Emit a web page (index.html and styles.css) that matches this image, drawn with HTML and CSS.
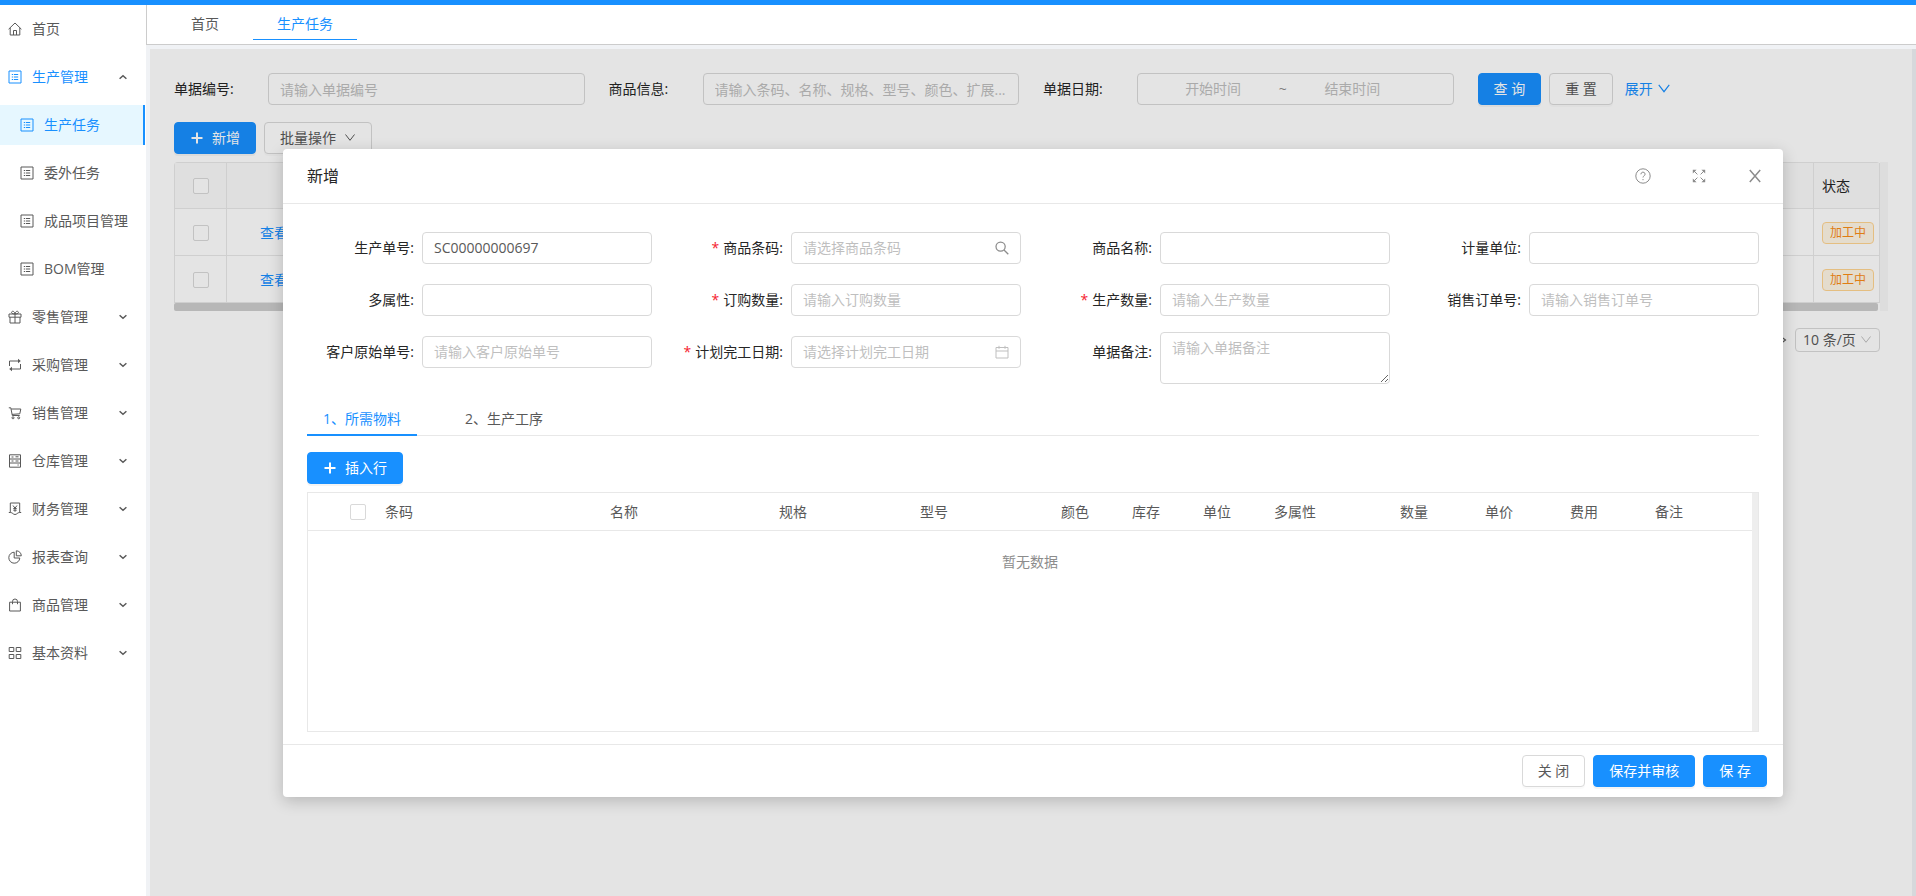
FILE: index.html
```html
<!DOCTYPE html>
<html lang="zh-CN">
<head>
<meta charset="utf-8">
<title>生产任务</title>
<link rel="stylesheet" href="styles.css">
</head>
<body>
<svg class="defs" aria-hidden="true">
  <symbol id="i-home" viewBox="0 0 14 14"><path d="M0.6 7.2 7 1l6.4 6.2M2.2 6v7h9.6V6M5.5 13V8.5h3V13"/></symbol>
  <symbol id="i-list" viewBox="0 0 14 14"><path d="M1 1h12v12H1zM3.8 4.5h1.4M3.8 7h1.4M3.8 9.5h1.4M6 4.5h4.2M6 7h4.2M6 9.5h4.2"/></symbol>
  <symbol id="i-gift" viewBox="0 0 14 14"><path d="M1 4h12v3.2H1zM2 7.2V13h10V7.2M7 4v9M7 4C4 4 3.4 3 3.6 2.1 4 .8 6.6.8 7 4c.4-3.200 3-3.200 3.400-1.900C10.600 3 10 4 7 4z"/></symbol>
  <symbol id="i-loop" viewBox="0 0 14 14"><path d="M1.500 8V3H11M1.500 6.500V3M12.500 6v5H3"/><path class="solid" d="M10 .8 12.800 3 10 5.200zM4 8.800 1.200 11 4 13.200z"/></symbol>
  <symbol id="i-cart" viewBox="0 0 14 14"><path d="M.8 1.800h2L4.300 9.500h7.400M3.200 3h9.600l-1 4.800-7.800.6"/><circle cx="5" cy="11.800" r="1"/><circle cx="10.700" cy="11.800" r="1"/></symbol>
  <symbol id="i-store" viewBox="0 0 14 14"><path d="M1.500.8h11v12.400h-11zM1.500 5h11M1.500 9h11M3.500 3h2M7.500 2.800h3M3.500 7h2M7.500 7h3M9.500 11h1.200"/></symbol>
  <symbol id="i-money" viewBox="0 0 14 14"><path d="M2.300 10.500V1h9.400v9.500M.8 10.500h1.500c2.500 0 2.700 2 4.700 2s2.200-2 4.700-2h1.500M5 3.500l2 2.700 2-2.700M7 6.200v3.600M5.300 6.500h3.400M5.300 8.200h3.400"/></symbol>
  <symbol id="i-pie" viewBox="0 0 14 14"><path d="M6.200 2.200A5.500 5.500 0 1 0 11.800 8H6.200zM8.300.8v5h5A5 5 0 0 0 8.300.8z"/></symbol>
  <symbol id="i-bag" viewBox="0 0 14 14"><path d="M1.600 4.200h10.800V13H1.600zM4.500 6.200V3.500a2.500 2.500 0 0 1 5 0v2.700"/></symbol>
  <symbol id="i-grid" viewBox="0 0 14 14"><path d="M1.200 1.500h4.600v4H1.200zM8.200 1.500h4.600v4H8.200zM1.200 8.500h4.600v4H1.200zM8.200 8.500h4.600v4H8.200z"/></symbol>
  <symbol id="i-down" viewBox="0 0 12 12"><path d="M1.500 2.500 6 8.300 10.500 2.500"/></symbol>
  <symbol id="i-caret" viewBox="0 0 8 8"><path d="M.6 2.200 4 5.200l3.400-3"/></symbol>
  <symbol id="i-plus" viewBox="0 0 14 14"><path d="M7 1.500v11M1.500 7h11"/></symbol>
  <symbol id="i-search" viewBox="0 0 14 14"><circle cx="5.600" cy="5.600" r="4.600"/><path d="m9 9 4.300 4.300"/></symbol>
  <symbol id="i-date" viewBox="0 0 14 14"><path d="M1 2.500h12V13H1zM1 6h12M4 .8v3M10 .8v3"/></symbol>
  <symbol id="i-help" viewBox="0 0 16 16"><circle cx="8" cy="8" r="7.200"/><path d="M5.900 6.300C5.900 3.400 10.100 3.500 10.100 6.200 10.100 7.900 8 7.700 8 9.500M8 11v1.200"/></symbol>
  <symbol id="i-full" viewBox="0 0 14 14"><path d="M2 2l3.400 3.400M12 2 8.600 5.400M12 12 8.600 8.600M2 12l3.400-3.400"/><path class="solid" d="M.8.800h3.800L.8 4.600zM13.200.8v3.800L9.400.8zM13.200 13.200H9.400l3.800-3.800zM.8 13.200V9.400l3.800 3.800z"/></symbol>
  <symbol id="i-close" viewBox="0 0 14 14"><path d="m1.800 1 10.400 12M12.200 1 1.800 13"/></symbol>
  <symbol id="i-next" viewBox="0 0 12 12"><path d="m3 1.500 6 4.500-6 4.500"/></symbol>
</svg>

<div class="app">
  <nav class="sidebar">
    <a class="item" href="#"><svg class="icon"><use href="#i-home"/></svg>首页</a>
    <a class="item open" href="#"><svg class="icon"><use href="#i-list"/></svg>生产管理<svg class="caret up"><use href="#i-caret"/></svg></a>
    <a class="item sub active" href="#"><svg class="icon"><use href="#i-list"/></svg>生产任务</a>
    <a class="item sub" href="#"><svg class="icon"><use href="#i-list"/></svg>委外任务</a>
    <a class="item sub" href="#"><svg class="icon"><use href="#i-list"/></svg>成品项目管理</a>
    <a class="item sub" href="#"><svg class="icon"><use href="#i-list"/></svg>BOM管理</a>
    <a class="item" href="#"><svg class="icon"><use href="#i-gift"/></svg>零售管理<svg class="caret"><use href="#i-caret"/></svg></a>
    <a class="item" href="#"><svg class="icon"><use href="#i-loop"/></svg>采购管理<svg class="caret"><use href="#i-caret"/></svg></a>
    <a class="item" href="#"><svg class="icon"><use href="#i-cart"/></svg>销售管理<svg class="caret"><use href="#i-caret"/></svg></a>
    <a class="item" href="#"><svg class="icon"><use href="#i-store"/></svg>仓库管理<svg class="caret"><use href="#i-caret"/></svg></a>
    <a class="item" href="#"><svg class="icon"><use href="#i-money"/></svg>财务管理<svg class="caret"><use href="#i-caret"/></svg></a>
    <a class="item" href="#"><svg class="icon"><use href="#i-pie"/></svg>报表查询<svg class="caret"><use href="#i-caret"/></svg></a>
    <a class="item" href="#"><svg class="icon"><use href="#i-bag"/></svg>商品管理<svg class="caret"><use href="#i-caret"/></svg></a>
    <a class="item" href="#"><svg class="icon"><use href="#i-grid"/></svg>基本资料<svg class="caret"><use href="#i-caret"/></svg></a>
  </nav>

  <div class="workspace">
    <div class="page-tabs">
      <a class="page-tab" href="#">首页</a>
      <a class="page-tab current" href="#">生产任务</a>
    </div>

    <main class="stage">
      <div class="page">
        <form class="search">
          <div class="search-field"><label for="q-no">单据编号:</label><input class="box" id="q-no" placeholder="请输入单据编号"></div>
          <div class="search-field"><label for="q-goods">商品信息:</label><input class="box" id="q-goods" placeholder="请输入条码、名称、规格、型号、颜色、扩展..."></div>
          <div class="search-field"><label for="q-from">单据日期:</label>
            <div class="box range"><input id="q-from" placeholder="开始时间"><span>~</span><input aria-label="结束时间" placeholder="结束时间"></div>
          </div>
          <div class="search-actions">
            <button class="btn primary" type="button">查 询</button>
            <button class="btn" type="button">重 置</button>
            <a class="expand" href="#">展开<svg class="chevron"><use href="#i-down"/></svg></a>
          </div>
        </form>

        <div class="toolbar">
          <button class="btn primary" type="button"><svg class="icon plus"><use href="#i-plus"/></svg>新增</button>
          <button class="btn" type="button">批量操作<svg class="chevron small"><use href="#i-down"/></svg></button>
        </div>

        <div class="list">
          <div class="list-main">
            <table class="orders">
              <colgroup><col class="c-check"><col><col class="c-status"></colgroup>
              <thead><tr><th><input type="checkbox" aria-label="全选"></th><th></th><th>状态</th></tr></thead>
              <tbody>
                <tr><td><input type="checkbox" aria-label="选择"></td><td class="ops"><a href="#">查看</a></td><td><span class="tag">加工中</span></td></tr>
                <tr><td><input type="checkbox" aria-label="选择"></td><td class="ops"><a href="#">查看</a></td><td><span class="tag">加工中</span></td></tr>
              </tbody>
            </table>
            <div class="h-thumb"></div>
          </div>
          <div class="v-track"></div>
        </div>

        <div class="pager">
          <button class="next" type="button" aria-label="下一页"><svg class="chevron"><use href="#i-next"/></svg></button>
          <div class="page-size">
            <select aria-label="每页条数"><option>10 条/页</option></select>
            <svg class="chevron small"><use href="#i-down"/></svg>
          </div>
        </div>
      </div>

      <div class="mask">
        <section class="modal" role="dialog" aria-labelledby="modal-title">
          <header class="modal-head">
            <h2 id="modal-title">新增</h2>
            <button type="button" aria-label="帮助"><svg class="large"><use href="#i-help"/></svg></button>
            <button type="button" aria-label="全屏"><svg class="icon"><use href="#i-full"/></svg></button>
            <button type="button" aria-label="关闭"><svg class="icon close"><use href="#i-close"/></svg></button>
          </header>

          <div class="modal-body">
            <form class="fields">
              <div class="field"><label for="f1">生产单号:</label><input class="box" id="f1" value="SC00000000697"></div>
              <div class="field required"><label for="f2">商品条码:</label><div class="with-icon"><input class="box" id="f2" placeholder="请选择商品条码"><svg class="icon search-icon"><use href="#i-search"/></svg></div></div>
              <div class="field"><label for="f3">商品名称:</label><input class="box" id="f3"></div>
              <div class="field"><label for="f4">计量单位:</label><input class="box" id="f4"></div>
              <div class="field"><label for="f5">多属性:</label><input class="box" id="f5"></div>
              <div class="field required"><label for="f6">订购数量:</label><input class="box" id="f6" placeholder="请输入订购数量"></div>
              <div class="field required"><label for="f7">生产数量:</label><input class="box" id="f7" placeholder="请输入生产数量"></div>
              <div class="field"><label for="f8">销售订单号:</label><input class="box" id="f8" placeholder="请输入销售订单号"></div>
              <div class="field"><label for="f9">客户原始单号:</label><input class="box" id="f9" placeholder="请输入客户原始单号"></div>
              <div class="field required"><label for="f10">计划完工日期:</label><div class="with-icon"><input class="box" id="f10" placeholder="请选择计划完工日期"><svg class="icon"><use href="#i-date"/></svg></div></div>
              <div class="field"><label for="f11">单据备注:</label><textarea class="box" id="f11" placeholder="请输入单据备注"></textarea></div>
            </form>

            <div class="tabs" role="tablist">
              <button class="tab selected" type="button" role="tab" aria-selected="true">1、所需物料</button>
              <button class="tab" type="button" role="tab" aria-selected="false">2、生产工序</button>
            </div>

            <button class="btn primary insert" type="button"><svg class="icon plus"><use href="#i-plus"/></svg>插入行</button>

            <div class="materials">
              <div class="materials-main">
                <table>
                  <colgroup>
                    <col class="w-check"><col class="w16"><col class="w12"><col class="w10"><col class="w10"><col class="w5"><col class="w5"><col class="w5"><col class="w9"><col class="w6"><col class="w6"><col class="w6"><col>
                  </colgroup>
                  <thead><tr>
                    <th><input type="checkbox" aria-label="全选"></th>
                    <th>条码</th><th>名称</th><th>规格</th><th>型号</th><th>颜色</th><th>库存</th><th>单位</th><th>多属性</th><th>数量</th><th>单价</th><th>费用</th><th>备注</th>
                  </tr></thead>
                </table>
                <p class="empty">暂无数据</p>
              </div>
              <div class="materials-track"></div>
            </div>
          </div>

          <footer class="modal-foot">
            <button class="btn" type="button">关 闭</button>
            <button class="btn primary" type="button">保存并审核</button>
            <button class="btn primary" type="button">保 存</button>
          </footer>
        </section>
      </div>
    </main>
  </div>
</div>
</body>
</html>
```

FILE: styles.css
```css
* { box-sizing: border-box; }

body {
  margin: 0;
  background: #f0f2f5;
  color: #595959;
  font: 14px/20px "Open Sans", "Noto Sans CJK SC", sans-serif;
}

input, button, select, textarea { font: inherit; color: inherit; margin: 0; }
a { color: #1890ff; text-decoration: none; }
svg { display: block; flex: none; fill: none; stroke: currentColor; stroke-width: 1; }
.solid { fill: currentColor; stroke: none; }
.defs { position: absolute; width: 0; height: 0; }
.icon { width: 14px; height: 14px; }
.large { width: 16px; height: 16px; }
.chevron { width: 14px; height: 14px; }
.chevron.small { width: 12px; height: 12px; }
.plus { stroke-width: 2; }

.app { display: flex; min-height: 100vh; border-top: 5px solid #1890ff; }

/* Sidebar */
.sidebar {
  display: flex;
  flex-direction: column;
  gap: 8px;
  flex: none;
  width: 146px;
  padding: 4px 1px 4px 0;
  background: #fff;
}
.item {
  display: flex;
  align-items: center;
  gap: 10px;
  height: 40px;
  padding: 0 18px 0 8px;
  color: #595959;
}
.item.open { color: #1890ff; }
.item.sub { padding: 0 0 0 20px; }
.item.active { background: #e6f7ff; color: #1890ff; border-right: 2px solid #1890ff; }
.caret { width: 8px; height: 8px; margin-left: auto; color: #595959; stroke-width: 1.5; }
.caret.up { transform: rotate(180deg); }

/* Workspace */
.workspace { display: flex; flex-direction: column; flex: 1; min-width: 0; }
.page-tabs {
  display: flex;
  gap: 10px;
  height: 40px;
  padding-left: 20px;
  background: #fff;
  border: solid #ccc;
  border-width: 0 0 1px 1px;
}
.page-tab { height: 35px; padding: 0 24px; line-height: 38px; color: #595959; }
.page-tab.current { color: #1890ff; border-bottom: 1px solid #1890ff; }

.stage { position: relative; flex: 1; margin: 4px 0 0 4px; padding-right: 4px; display: flex; }
.page { flex: 1; min-width: 0; padding: 24px; background: #fff; }

.box {
  display: block;
  width: 100%;
  min-width: 0;
  height: 32px;
  padding: 0 11px;
  border: 1px solid #d9d9d9;
  border-radius: 4px;
  background: #fff;
  text-overflow: ellipsis;
}
::placeholder { color: #bfbfbf; opacity: 1; }

.btn {
  display: inline-flex;
  align-items: center;
  justify-content: center;
  gap: 8px;
  height: 32px;
  padding: 0 15px;
  border: 1px solid #d9d9d9;
  border-radius: 4px;
  background: #fff;
  box-shadow: 0 2px 0 rgba(0, 0, 0, .02);
  white-space: nowrap;
}
.btn.primary { background: #1890ff; border-color: #1890ff; color: #fff; box-shadow: 0 2px 0 rgba(0, 0, 0, .045); }

input[type="checkbox"] {
  display: block;
  appearance: none;
  width: 16px;
  height: 16px;
  margin: 0 auto;
  border: 1px solid #d9d9d9;
  border-radius: 2px;
  background: #fff;
}

.search { display: grid; grid-template-columns: repeat(4, 1fr); gap: 24px; color: #262626; }
.search-field { display: grid; grid-template-columns: 94px 1fr; align-items: center; }
.search-actions { display: flex; align-items: center; gap: 8px; color: #595959; }
.expand { display: flex; align-items: center; gap: 4px; margin-left: 4px; }
.range { display: flex; align-items: center; padding: 0 36px 0 11px; }
.range input { flex: 1; min-width: 0; border: 0; padding: 0; background: none; text-align: center; }
.range span { width: 11px; text-align: center; color: #8c8c8c; }

.toolbar { display: flex; gap: 8px; margin: 17px 0 8px; }

.list { display: flex; }
.list-main { flex: 1; }
.v-track { width: 8px; background: #f8f8f8; }
.h-thumb { height: 8px; margin-right: 2px; border-radius: 2px; background: #cdcdcd; }
.orders {
  width: 100%;
  table-layout: fixed;
  border-collapse: separate;
  border-spacing: 0;
  border: solid #e8e8e8;
  border-width: 1px 0 0 1px;
  border-radius: 4px 4px 0 0;
}
.orders th, .orders td {
  height: 47px;
  padding: 1px 4px 0 8px;
  border: solid #e8e8e8;
  border-width: 0 1px 1px 0;
  text-align: left;
  font-weight: 400;
}
.orders th { height: 46px; background: #fafafa; color: #262626; }
.orders th:first-child, .orders td:first-child { padding: 1px 0 0; }
.orders td.ops { padding-left: 33px; }
.c-check { width: 52px; }
.c-status { width: 66px; }
.tag {
  display: inline-block;
  height: 22px;
  padding: 0 7px;
  border: 1px solid #ffd591;
  border-radius: 4px;
  background: #fff7e6;
  color: #fa8c16;
  font-size: 12px;
  white-space: nowrap;
}

.pager { display: flex; justify-content: flex-end; align-items: center; gap: 6px; margin: 17px 8px 0 0; }
.next { padding: 0; border: 0; background: none; }
.page-size { display: grid; align-items: center; width: 85px; }
.page-size select, .page-size svg { grid-area: 1 / 1; }
.page-size select {
  appearance: none;
  height: 24px;
  padding: 0 7px;
  border: 1px solid #d9d9d9;
  border-radius: 4px;
  background: #fff;
}
.page-size svg { justify-self: end; margin-right: 8px; color: #bfbfbf; }

/* Dialog */
.mask {
  position: absolute;
  inset: 0;
  display: flex;
  align-items: flex-start;
  justify-content: center;
  padding-top: 100px;
  background: rgba(0, 0, 0, .106);
}
.modal {
  width: 90%;
  max-width: 1500px;
  border-radius: 4px;
  background: #fff;
  box-shadow: 0 4px 16px rgba(0, 0, 0, .2);
}
.modal-head {
  display: flex;
  align-items: center;
  gap: 40px;
  padding: 16px 20px 16px 24px;
  border-bottom: 1px solid #e8e8e8;
}
.modal-head h2 { flex: 1; margin: 0; color: #262626; font-size: 16px; line-height: 22px; font-weight: 400; }
.modal-head button { display: grid; place-items: center; width: 16px; height: 16px; padding: 0; border: 0; background: none; color: #8c8c8c; }
.close { stroke-width: 1.5; }
.modal-body { padding: 24px 24px 12px; }

.fields { display: grid; grid-template-columns: repeat(4, 1fr); gap: 12px 24px; }
.field { display: grid; grid-template-columns: 1fr 2fr; align-items: start; }
.field label { padding-right: 8px; line-height: 40px; text-align: right; color: #262626; white-space: nowrap; }
.field.required label::before { content: "*"; margin-right: 4px; color: #f5222d; }
.field > .box, .with-icon { margin-top: 4px; }
.field .box { padding-bottom: 1px; }
.field > textarea.box { height: 52px; margin-top: 0; padding: 5px 11px; resize: vertical; }
.with-icon { display: grid; align-items: center; }
.with-icon > * { grid-area: 1 / 1; }
.with-icon svg { justify-self: end; margin-right: 12px; color: #bfbfbf; }
.with-icon .search-icon { color: #8c8c8c; stroke-width: 1.25; }

.tabs { display: flex; gap: 32px; margin-top: 16px; box-shadow: inset 0 -1px #e8e8e8; }
.tab { height: 36px; padding: 4px 16px 0; border: 0; border-bottom: 2px solid transparent; background: none; }
.tab.selected { color: #1890ff; border-color: #1890ff; }
.insert { margin: 16px 0 8px; }

.materials { display: flex; min-height: 240px; border: 1px solid #e8e8e8; }
.materials-main { flex: 1; min-width: 0; }
.materials-track { width: 6px; background: #eee; }
.materials table { width: 100%; table-layout: fixed; border-spacing: 0; }
.materials th { height: 38px; padding: 0; border-bottom: 1px solid #e8e8e8; text-align: left; font-weight: 400; }
.materials th:first-child { padding-left: 23px; }
.w-check { width: 77px; }
.w16 { width: 225px; }
.w12 { width: 169px; }
.w10 { width: 141px; }
.w9 { width: 126px; }
.w6 { width: 85px; }
.w5 { width: 71px; }
.empty { margin: 21px 0; text-align: center; color: #8c8c8c; }

.modal-foot { display: flex; justify-content: flex-end; gap: 8px; padding: 10px 16px; border-top: 1px solid #e8e8e8; }
```
